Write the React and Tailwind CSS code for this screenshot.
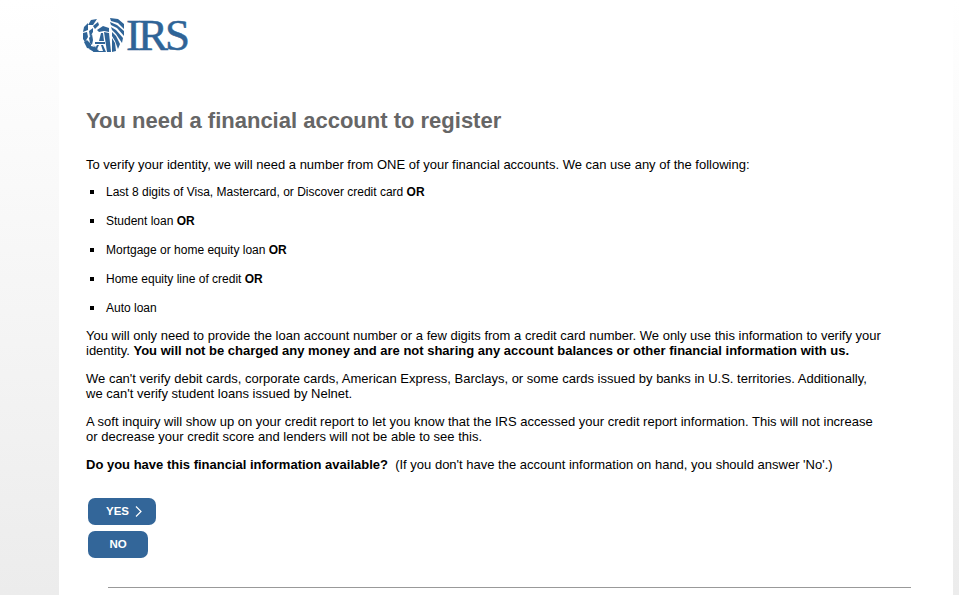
import React from "react";

const items = [
  { text: "Last 8 digits of Visa, Mastercard, or Discover credit card", or: true },
  { text: "Student loan", or: true },
  { text: "Mortgage or home equity loan", or: true },
  { text: "Home equity line of credit", or: true },
  { text: "Auto loan", or: false },
];

const Eagle = () => (
  <svg width="42" height="36" viewBox="0 0 42 36" fill="#2f6497">
    {/* laurel */}
    <path d="M14 2 L8 3 L5 8 L10 8 Z" />
    <path d="M5 6 L1 10 L0 15 L5 13 Z" />
    <path d="M0 16 L0 22 L2 25 L5 20 L4 15 Z" />
    <path d="M1 25 L4 31 L8 32 L8 27 L4 23 Z" />
    <path d="M6 32 L11 35 L17 35 L12 30 L8 29 Z" />
    <path d="M10 9 L15 5 L16 8 L12 12 Z" />
    <path d="M6 14 L10 11 L10 15 L7 20 Z" />
    <path d="M6 21 L9 17 L10 23 L9 28 L7 26 Z" />
    <path d="M10 28 L13 30 L16 33 L12 30 Z" />
    {/* wing */}
    <path d="M27 1 L35 2 L41 7 L41 12 L35 6 L28 4 Z" />
    <path d="M27 5 L34 8 L41 14 L41 19 L34 11 L28 8 Z" />
    <path d="M28 10 L33 13 L40 21 L39 26 L33 17 L29 13 Z" />
    <path d="M29 15 L33 19 L37 27 L35 32 L32 24 L29 19 Z" />
    <path d="M29 21 L32 26 L33 34 L29 35 Z" />
    {/* head and scales */}
    <path d="M14 13 L20 9 L26 11 L26 15 L21 14 L16 15 Z" />
    <path d="M21 15 L26 16 L28 35 L24 35 Z" />
    <path d="M18 16 L20 16 L21 24 L16 24 Z" />
    <path d="M12 25 L22 25 L22 27 L12 27 Z" />
    <path d="M14 28 L16 28 L13 34 L20 34 L18 28 L20 28 L23 35 L10 35 Z" />
  </svg>
);

const App = () => {
  return (
    <div className="h-[595px] overflow-hidden bg-gradient-to-b from-white to-[#ececec] pl-[59px] pr-[6px] font-['Liberation_Sans',Arial,sans-serif] text-[13px] leading-[15px] text-black">
      <div className="h-full bg-white pl-[27px]">
        <div className="flex items-center h-[36px] pt-[17px] box-content -ml-[3px]">
          <Eagle />
          <span className="ml-[1px] font-['Liberation_Serif',serif] text-[45px] leading-[36px] text-[#2f6497] tracking-[-3px] [-webkit-text-stroke:0.5px_#2f6497]">
            IRS
          </span>
        </div>

        <h1 className="mt-[53px] text-[22px] leading-[30px] font-bold text-[#666666]">
          You need a financial account to register
        </h1>

        <p className="mt-[21px]">
          To verify your identity, we will need a number from ONE of your financial accounts. We can use any of the following:
        </p>

        <ul className="mt-[5px] pl-[20px] flex flex-col text-[12px] leading-[14px]">
          {items.map((item) => (
            <li key={item.text} className="relative h-[29px] pt-[8px]">
              <span className="absolute left-[-16px] top-[13px] w-[4px] h-[4px] bg-black" />
              {item.text} {item.or && <b>OR</b>}
            </li>
          ))}
        </ul>

        <p className="mt-[6px] w-[798px]">
          You will only need to provide the loan account number or a few digits from a credit card number. We only use this information to verify your identity. <b>You will not be charged any money and are not sharing any account balances or other financial information with us.</b>
        </p>
        <p className="mt-[13px] w-[798px]">
          We can't verify debit cards, corporate cards, American Express, Barclays, or some cards issued by banks in U.S. territories. Additionally, we can't verify student loans issued by Nelnet.
        </p>
        <p className="mt-[13px] w-[798px]">
          A soft inquiry will show up on your credit report to let you know that the IRS accessed your credit report information. This will not increase or decrease your credit score and lenders will not be able to see this.
        </p>
        <p className="mt-[13px]">
          <b>Do you have this financial information available?</b>&nbsp; (If you don't have the account information on hand, you should answer 'No'.)
        </p>

        <div className="mt-[26px] ml-[2px] flex flex-col items-start gap-[6px]">
          <button className="flex items-center justify-center gap-[6px] w-[68px] h-[27px] pl-[4px] rounded-[7px] bg-[#336699] text-white text-[11.5px] font-bold">
            YES
            <svg width="7" height="11" viewBox="0 0 7 11" fill="none" stroke="white" strokeWidth="1.2">
              <path d="M1 0.5 L6 5.5 L1 10.5" />
            </svg>
          </button>
          <button className="w-[60px] h-[27px] rounded-[7px] bg-[#336699] text-white text-[11.5px] font-bold">
            NO
          </button>
        </div>

        <hr className="mt-[29px] ml-[22px] w-[803px] border-0 border-t border-[#999999]" />
      </div>
    </div>
  );
};

export default App;
